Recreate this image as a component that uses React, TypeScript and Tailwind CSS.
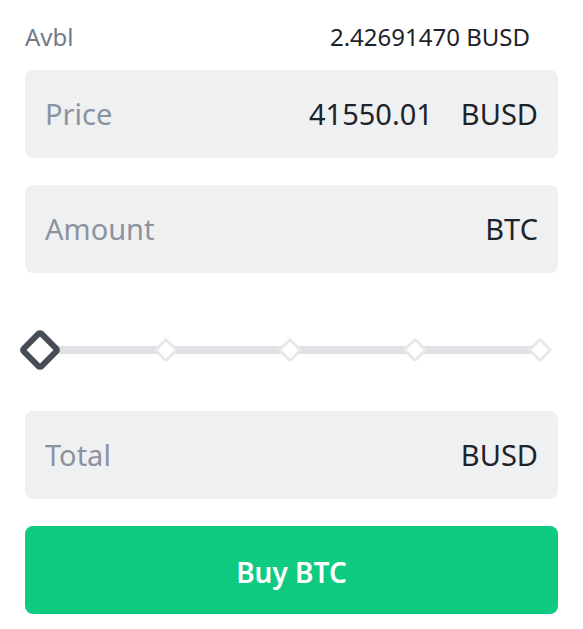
function Field({ label, value, unit }: { label: string; value?: string; unit: string }) {
  return (
    <div className="flex h-[88px] items-center rounded-lg bg-[#eff0f2] px-5 text-[29px]">
      <span className="text-[#8b93a0]">{label}</span>
      <span className="ml-auto text-[#1e2329]">{value}</span>
      <span className={value ? "ml-7 text-[#1e2329]" : "text-[#1e2329]"}>{unit}</span>
    </div>
  );
}

function Slider() {
  return (
    <div className="relative h-[60px]">
      <div className="absolute left-[15px] right-[17px] top-1/2 h-2 -translate-y-1/2 bg-[#dfe1e5]" />
      <div className="absolute left-[15px] top-1/2 h-[31px] w-[31px] -translate-x-1/2 -translate-y-1/2 rotate-45 rounded-[5px] border-[6px] border-[#474d57] bg-white" />
      {[141, 265, 390, 515].map((x) => (
        <div
          key={x}
          style={{ left: x }}
          className="absolute top-1/2 h-[18px] w-[18px] -translate-x-1/2 -translate-y-1/2 rotate-45 rounded-[3px] border-[3px] border-[#e6e8ea] bg-white"
        />
      ))}
    </div>
  );
}

export default function App() {
  return (
    <div className="h-[629px] w-[583px] bg-white px-[25px] pt-[18px] font-['Noto_Sans',sans-serif]">
      <div className="flex items-center pr-[28px] text-[24px] leading-[38px]">
        <span className="text-[#707a8a]">Avbl</span>
        <span className="ml-auto text-[#1e2329]">2.42691470 BUSD</span>
      </div>
      <div className="mt-[14px] flex flex-col gap-[27px]">
        <Field label="Price" value="41550.01" unit="BUSD" />
        <Field label="Amount" unit="BTC" />
      </div>
      <div className="mt-[47px]">
        <Slider />
      </div>
      <div className="mt-[31px]">
        <Field label="Total" unit="BUSD" />
      </div>
      <button className="mt-[27px] h-[88px] w-full rounded-lg bg-[#0ecb81] pt-1 text-[28px] font-semibold text-white">
        Buy BTC
      </button>
    </div>
  );
}
